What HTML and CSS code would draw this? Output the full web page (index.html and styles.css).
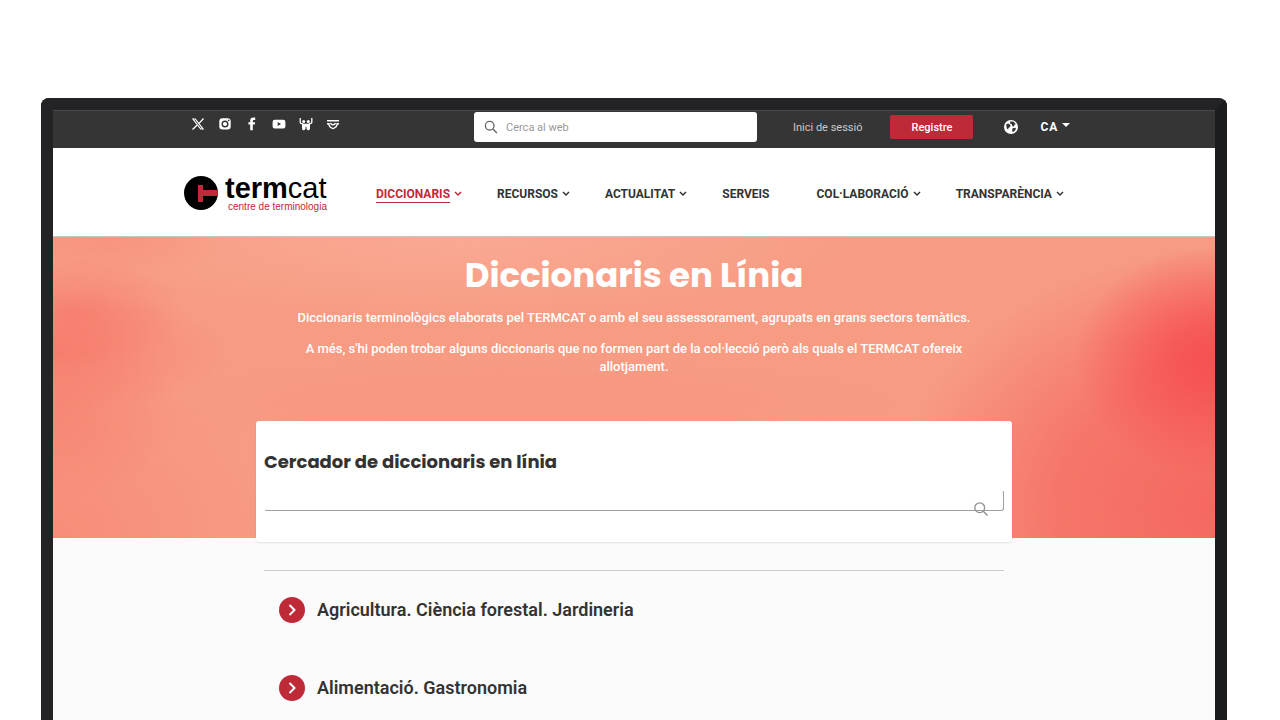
FILE: index.html
```
<!DOCTYPE html>
<html lang="ca">
<head>
    <meta charset="utf-8">
    <title>Diccionaris en Línia | TERMCAT</title>
    <link rel="stylesheet" href="styles.css">
</head>
<body>
<div class="monitor">
    <div class="top-bar">
        <div class="container top-content">
            <div class="social">
                <a href="#" aria-label="X"><svg viewBox="0 0 14 14"><path d="M2 2h2.300l7.700 10H9.700z" fill="none" stroke="#fff" stroke-width="1.200"/><path d="M12.500 1.500L8 6.400M6 8.200L1.500 12.500" stroke="#fff" stroke-width="1.300"/></svg></a>
                <a href="#" aria-label="Instagram"><svg viewBox="0 0 14 14"><rect x="1.300" y="1.200" width="11.400" height="11.400" rx="3" fill="#fff"/><circle cx="7" cy="7" r="2.800" fill="none" stroke="#353535" stroke-width="1.400"/><circle cx="10.700" cy="3.400" r=".8" fill="#353535"/></svg></a>
                <a href="#" aria-label="Facebook"><svg viewBox="0 0 14 14"><path d="M5.200 13.300V7.600H3.400V5.300h1.800V3.700C5.200 1.600 6.400.6 8.200.6h2v2.400H8.900c-.8 0-1.100.4-1.100 1.100v1.200h2.300l-.3 2.300h-2v5.700z" fill="#fff"/></svg></a>
                <a href="#" aria-label="YouTube"><svg viewBox="0 0 14 14"><rect x=".6" y="2.800" width="12.800" height="8.600" rx="2.200" fill="#fff"/><path d="M5.700 5.100v3.800L9 7z" fill="#353535"/></svg></a>
                <a href="#" aria-label="SlideShare"><svg viewBox="0 0 14 14"><path d="M1.200 1v4.300c0 1.200 1 1.500 3 1.700M12.800 1v4.300c0 1.200-1 1.500-3 1.700" fill="none" stroke="#fff" stroke-width="1.300"/><circle cx="4.700" cy="4.500" r="1.500" fill="#fff"/><circle cx="9.300" cy="4.500" r="1.500" fill="#fff"/><path d="M3 6.800h8v4.200c0 3-3.400 3-3.500.3V9.800h-1v1.500C6.400 14 3 14 3 11z" fill="#fff"/></svg></a>
                <a href="#" aria-label="Butlletí"><svg viewBox="0 0 14 14"><path d="M1 3h12v1.500H1zM1 6h2.500v1.500H1zM10.500 6H13v1.500h-2.500z" fill="#fff"/><path d="M2.600 6.300c.3 3 2 4.700 4.400 5.300 2.400-.6 4.100-2.300 4.400-5.300M4.600 5.800c.5 2.600 4.300 2.600 4.800 0" fill="none" stroke="#fff" stroke-width="1.400"/></svg></a>
            </div>
            <form class="web-search">
                <svg viewBox="0 0 14 14"><circle cx="5.700" cy="5.700" r="4.300" fill="none" stroke="#666" stroke-width="1.300"/><path d="M8.900 8.900l4 4" stroke="#666" stroke-width="1.400"/></svg>
                <input type="text" placeholder="Cerca al web" aria-label="Cerca al web">
            </form>
            <div class="user-menu">
                <a class="login" href="#">Inici de sessió</a>
                <button class="register" type="button">Registre</button>
                <svg class="globe" viewBox="0 0 14 14"><circle cx="7" cy="7" r="7" fill="#fff"/><path d="M2.200 4.200l2.200-.6 2.200 1.600-.6 1.700-1.600 1-.2 1.800-1.500-1.400zM6.200 1.500l3 .1 2.600 2.500-1.500.9-.3 1.600-1.600-.3-.6-2L6 3.600zM8.600 8.300l2.800-.6.600 1.300-1.700 2.300-1.500.8-.7-1.700z" fill="#353535"/></svg>
                <button class="language" type="button">CA <span class="caret"></span></button>
            </div>
        </div>
    </div>
    <header class="header">
        <div class="container header-content">
            <a class="logo" href="#">
                <svg viewBox="0 0 34 34"><circle cx="17" cy="17" r="17" fill="#000"/><path d="M14 9h5v5h14.700a17 17 0 0 1 0 6H19v6h-5z" fill="#be2a38"/></svg>
                <span class="logo-text">
                    <span class="logo-name"><b>term</b>cat</span>
                    <span class="logo-sub">centre de terminologia</span>
                </span>
            </a>
            <nav class="menu">
                <a class="active" href="#"><span>DICCIONARIS</span><svg viewBox="0 0 8 6"><path d="M1 1l3 3 3-3"/></svg></a>
                <a href="#"><span>RECURSOS</span><svg viewBox="0 0 8 6"><path d="M1 1l3 3 3-3"/></svg></a>
                <a href="#"><span>ACTUALITAT</span><svg viewBox="0 0 8 6"><path d="M1 1l3 3 3-3"/></svg></a>
                <a class="single" href="#"><span>SERVEIS</span></a>
                <a href="#"><span>COL·LABORACIÓ</span><svg viewBox="0 0 8 6"><path d="M1 1l3 3 3-3"/></svg></a>
                <a href="#"><span>TRANSPARÈNCIA</span><svg viewBox="0 0 8 6"><path d="M1 1l3 3 3-3"/></svg></a>
            </nav>
        </div>
    </header>
    <main>
        <section class="hero">
            <h1>Diccionaris en Línia</h1>
            <p>Diccionaris terminològics elaborats pel TERMCAT o amb el seu assessorament, agrupats en grans sectors temàtics.</p>
            <p>A més, s'hi poden trobar alguns diccionaris que no formen part de la col·lecció però als quals el TERMCAT ofereix allotjament.</p>
        </section>
        <form class="finder">
            <h2><label for="finder-text">Cercador de diccionaris en línia</label></h2>
            <div class="finder-field">
                <input type="text" id="finder-text">
                <button type="button" aria-label="Cerca"><svg viewBox="0 0 14 14"><circle cx="5.700" cy="5.700" r="4.900" fill="none" stroke="#8f8f94" stroke-width="1.300"/><path d="M9.300 9.300l4.200 4.200" stroke="#8f8f94" stroke-width="1.500"/></svg></button>
            </div>
        </form>
        <ul class="sectors">
            <li><a href="#"><svg viewBox="0 0 26 26"><circle cx="13" cy="13" r="13"/><path d="M10.500 8l5 5-5 5"/></svg>Agricultura. Ciència forestal. Jardineria</a></li>
            <li><a href="#"><svg viewBox="0 0 26 26"><circle cx="13" cy="13" r="13"/><path d="M10.500 8l5 5-5 5"/></svg>Alimentació. Gastronomia</a></li>
        </ul>
    </main>
</div>
</body>
</html>
```

FILE: styles.css
```
* {
    box-sizing: border-box;
}
body {
    margin: 0;
    padding-top: 98px;
    background: #fff;
    color: #333;
    font-family: Roboto, "Liberation Sans", sans-serif;
}
a {
    color: inherit;
    text-decoration: none;
}
input, button {
    font-family: inherit;
    margin: 0;
}
button {
    border: 0;
    cursor: pointer;
}
.monitor {
    min-height: calc(100vh - 98px);
    margin: 0 53px 0 41px;
    border: 12px solid #232326;
    border-right-color: #1b1c1e;
    border-bottom: 0;
    border-radius: 8px 8px 0 0;
    background: #fbfbfb;
}
.container {
    max-width: 900px;
    margin: 0 auto;
}

/* top bar */
.top-bar {
    background: #353535;
    border-top: 1px solid #48484a;
}
.top-content {
    display: grid;
    grid-template-columns: 290px 283px 1fr;
    height: 37px;
}
.social {
    display: flex;
    gap: 13px;
    padding: 6px 0 0 7px;
}
.social a, .social svg {
    display: block;
    width: 14px;
    height: 14px;
}
.web-search {
    display: flex;
    align-items: center;
    gap: 8px;
    height: 30px;
    margin-top: 1px;
    padding: 0 10px;
    background: #fff;
    border-radius: 3px;
}
.web-search svg {
    width: 14px;
    height: 14px;
}
.web-search input {
    flex: 1;
    min-width: 0;
    padding: 0;
    border: 0;
    outline: 0;
    font-size: 11px;
}
.web-search input::placeholder {
    color: #999;
}
.user-menu {
    display: flex;
    align-items: center;
    height: 32px;
    padding-left: 36px;
    color: #fff;
}
.login {
    font-size: 11px;
    color: #c9c9cc;
}
.register {
    width: 83px;
    height: 24px;
    margin: 0 31px 0 28px;
    padding: 0;
    border-radius: 2px;
    background: #be2a38;
    color: #fff;
    font-size: 11px;
    font-weight: 500;
}
.globe {
    width: 14px;
    height: 14px;
}
.language {
    display: flex;
    align-items: center;
    gap: 4px;
    margin-left: 22px;
    padding: 0;
    background: none;
    color: #fff;
    font-size: 12px;
    font-weight: bold;
    letter-spacing: 1px;
}
.caret {
    margin-bottom: 4px;
    border: 4px solid transparent;
    border-top-color: #fff;
    border-bottom: 0;
}

/* header */
.header {
    background: #fff;
    border-bottom: 1px solid #c8c8c8;
}
.header-content {
    display: flex;
    align-items: center;
    height: 88px;
    padding-top: 4px;
}
.logo {
    display: flex;
    gap: 7px;
    width: 192px;
}
.logo svg {
    width: 34px;
    height: 34px;
}
.logo-text {
    display: flex;
    flex-direction: column;
    font-family: "Liberation Sans", Arial, sans-serif;
}
.logo-name {
    font-size: 29px;
    line-height: 25px;
    color: #000;
}
.logo-sub {
    padding-left: 3px;
    font-size: 10px;
    line-height: 12px;
    color: #be2a38;
}
.menu {
    display: flex;
    gap: 35px;
    font-size: 12px;
    font-weight: bold;
    line-height: 16px;
}
.menu a {
    display: flex;
    align-items: center;
    gap: 4px;
}
.menu svg {
    width: 8px;
    height: 6px;
    fill: none;
    stroke: currentColor;
    stroke-width: 1.500;
}
.menu .active {
    color: #be2a38;
}
.menu .active span {
    border-bottom: 1px solid #be2a38;
}
.menu .single {
    padding-right: 12px;
}

/* hero */
.hero {
    height: 301px;
    padding-top: 17px;
    color: #fff;
    text-align: center;
    background:
        radial-gradient(ellipse 140px 115px at 100% 41%, #f65051 0%, rgba(246, 80, 80, 0.8) 30%, rgba(246, 90, 85, 0) 100%),
        radial-gradient(ellipse 320px 260px at 100% 90%, #f5685f 0%, rgba(245, 106, 96, 0.75) 50%, rgba(245, 106, 96, 0) 100%),
        radial-gradient(ellipse 110px 55px at 2% 25%, rgba(246, 112, 100, 0.55), rgba(246, 112, 100, 0)),
        radial-gradient(ellipse 180px 60px at 0 38%, rgba(246, 112, 100, 0.6), rgba(246, 112, 100, 0)),
        radial-gradient(ellipse 130px 90px at 0 58%, rgba(246, 118, 104, 0.5), rgba(246, 118, 104, 0)),
        radial-gradient(ellipse 120px 40px at 5% 0, rgba(248, 132, 112, 0.4), rgba(248, 132, 112, 0)),
        radial-gradient(ellipse 230px 180px at 0 100%, rgba(247, 134, 115, 0.7), rgba(247, 134, 115, 0)),
        radial-gradient(ellipse 400px 80px at 35% 0, #faa994, rgba(250, 169, 148, 0)),
        radial-gradient(ellipse 500px 60px at 40% 55%, rgba(247, 148, 125, 0.6), rgba(247, 148, 125, 0)),
        #f79c83;
}
.hero h1 {
    margin: 0 0 13px;
    font-family: Poppins, Inter, sans-serif;
    font-size: 34px;
    line-height: 42px;
}
.hero p {
    max-width: 700px;
    margin: 0 auto 13px;
    font-size: 13px;
    font-weight: 500;
    line-height: 18px;
}

/* finder */
.finder {
    position: relative;
    max-width: 756px;
    margin: -117px auto 0;
    padding: 29px 8px 31px;
    background: #fff;
    border-radius: 3px;
    box-shadow: 0 1px 2px rgba(0, 0, 0, 0.1);
}
.finder h2 {
    margin: 0 0 16px;
    font-family: Poppins, Inter, sans-serif;
    font-size: 18px;
    line-height: 24px;
}
.finder-field {
    position: relative;
}
.finder-field input {
    display: block;
    width: 100%;
    height: 21px;
    padding: 0 8px;
    border: 1px solid #a0a0a0;
    border-top-color: #fff;
    border-left-color: #fff;
    border-radius: 3px;
    outline: 0;
}
/* the icon hangs over the lower edge of the field */
.finder-field button {
    position: absolute;
    right: 16px;
    top: 12px;
    padding: 0;
    background: none;
}
.finder-field svg {
    display: block;
    width: 14px;
    height: 14px;
}

/* sectors */
.sectors {
    display: flex;
    flex-direction: column;
    gap: 52px;
    max-width: 740px;
    margin: 28px auto 0;
    padding: 26px 0 0 15px;
    border-top: 1px solid #ccc;
    list-style: none;
}
.sectors a {
    display: flex;
    align-items: center;
    gap: 12px;
    font-size: 18px;
    font-weight: 600;
    line-height: 26px;
}
.sectors svg {
    width: 26px;
    height: 26px;
    fill: #be2a38;
}
.sectors path {
    fill: none;
    stroke: #fff;
    stroke-width: 2;
}
```
